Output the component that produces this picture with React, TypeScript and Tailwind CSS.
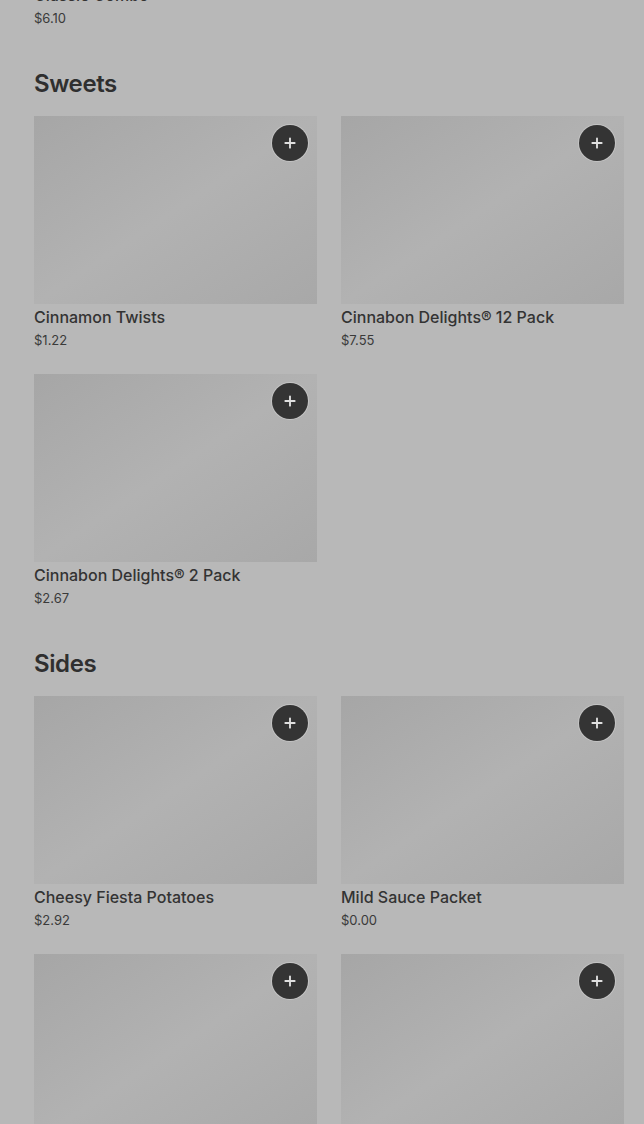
import { Plus } from "lucide-react";

type Item = { name: string; price: string };

const sections: { title: string; items: Item[] }[] = [
  {
    title: "Sweets",
    items: [
      { name: "Cinnamon Twists", price: "$1.22" },
      { name: "Cinnabon Delights® 12 Pack", price: "$7.55" },
      { name: "Cinnabon Delights® 2 Pack", price: "$2.67" },
    ],
  },
  {
    title: "Sides",
    items: [
      { name: "Cheesy Fiesta Potatoes", price: "$2.92" },
      { name: "Mild Sauce Packet", price: "$0.00" },
      { name: "Chips and Nacho Cheese Sauce", price: "$2.45" },
      { name: "Black Beans and Rice", price: "$2.67" },
    ],
  },
];

function ItemCard({ item }: { item: Item }) {
  return (
    <div className="flex flex-col">
      <div className="relative h-[188px] bg-linear-to-br from-[#a6a6a6] via-[#b2b2b2] to-[#a8a8a8]">
        <button className="absolute right-[9px] top-[9px] flex h-9 w-9 items-center justify-center rounded-full bg-[#343434] ring-1 ring-[#c4c4c4]">
          <Plus className="h-4 w-4 text-[#e0e0e0]" strokeWidth={2.8} />
        </button>
      </div>
      <div className="mt-[2px] text-[16px] font-medium leading-[22px] text-[#333]">{item.name}</div>
      <div className="mt-px text-[13px] leading-[22px] text-[#3a3a3a]">{item.price}</div>
    </div>
  );
}

export default function App() {
  return (
    <div className="min-h-screen overflow-hidden bg-[#b8b8b8] pl-[34px] pr-[20px] font-['Inter',sans-serif]">
      <div className="-mt-[16px]">
        <div className="text-[16px] font-medium leading-[22px] text-[#333]">Classic Combo</div>
        <div className="mt-px text-[13px] leading-[22px] text-[#3a3a3a]">$6.10</div>
      </div>
      {sections.map((s) => (
        <section key={s.title} className="mt-[39px]">
          <h2 className="text-[24px] font-semibold leading-[32px] tracking-[-0.4px] text-[#2f2f2f]">{s.title}</h2>
          <div className="mt-4 grid grid-cols-2 gap-x-6 gap-y-[23px]">
            {s.items.map((it) => (
              <ItemCard key={it.name} item={it} />
            ))}
          </div>
        </section>
      ))}
    </div>
  );
}
